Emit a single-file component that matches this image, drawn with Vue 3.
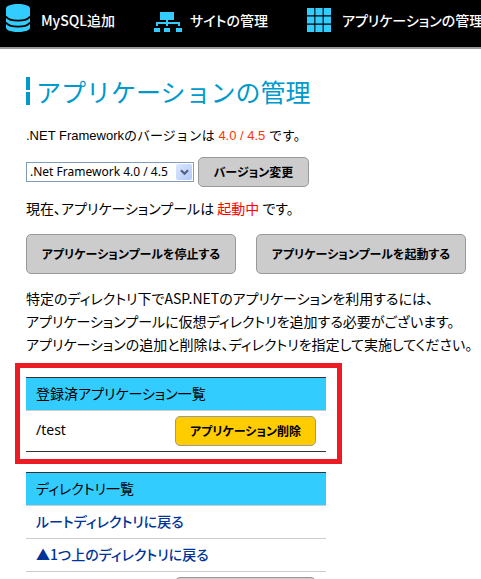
<script setup>
import { ref } from 'vue'

const version = ref('4')
</script>

<template>
  <div class="page">
    <header class="topbar">
      <nav class="nav">
        <a class="nav-item database" href="#">
          <svg width="24" height="28" viewBox="0 0 24 28" aria-hidden="true">
            <path fill="#33ccff" d="M0 4.5C0 -1.5 24 -1.5 24 4.5V23.5C24 29.5 0 29.5 0 23.5Z" />
            <path fill="none" stroke="#000" stroke-width="1.6" d="M0 12.5C3 18 21 18 24 12.5M0 18.5C3 24 21 24 24 18.5" />
          </svg>
          <span>MySQL追加</span>
        </a>
        <a class="nav-item site" href="#">
          <svg width="28" height="20" viewBox="0 0 28 20" aria-hidden="true">
            <path fill="#33ccff" d="M6 0h14v8H6zM12 8h2v6h-2zM2 10h24v4h-2v-2H4v2H2zM0 16h6v4H0zM10 16h6v4h-6zM22 16h6v4h-6z" />
          </svg>
          <span>サイトの管理</span>
        </a>
        <a class="nav-item application" href="#">
          <svg width="24" height="24" viewBox="0 0 24 24" aria-hidden="true">
            <path fill="#33ccff" d="M0 0h7.3v7.3H0zM8.4 0h7.2v7.3H8.4zM16.7 0H24v7.3h-7.3zM0 8.4h7.3v7.2H0zM8.4 8.4h7.2v7.2H8.4zM16.7 8.4H24v7.2h-7.3zM0 16.7h7.3V24H0zM8.4 16.7h7.2V24H8.4zM16.7 16.7H24V24h-7.3z" />
          </svg>
          <span>アプリケーションの管理</span>
        </a>
      </nav>
    </header>

    <main class="content">
      <h1 class="title">
        <span class="title-mark" aria-hidden="true"><i></i><i></i></span>
        アプリケーションの管理
      </h1>

      <p class="status framework">
        <label for="version">.NET Frameworkのバージョンは</label> <span class="version">4.0 / 4.5</span> です。
      </p>

      <form class="version-form" @submit.prevent>
        <span class="select-box">
          <select id="version" v-model="version">
            <option value="4">.Net Framework 4.0 / 4.5</option>
          </select>
          <span class="arrow" aria-hidden="true">
            <svg width="9" height="7" viewBox="0 0 9 7">
              <path fill="none" stroke="#4d6185" stroke-width="2.2" d="M1 1.2L4.5 4.7L8 1.2" />
            </svg>
          </span>
        </span>
        <button class="button small" type="submit">バージョン変更</button>
      </form>

      <p class="status">現在、アプリケーションプールは <span class="running">起動中</span> です。</p>

      <div class="pool-actions">
        <button class="button large" type="button">アプリケーションプールを停止する</button>
        <button class="button large" type="button">アプリケーションプールを起動する</button>
      </div>

      <p class="note">
        特定のディレクトリ下でASP.NETのアプリケーションを利用するには、<br />
        アプリケーションプールに仮想ディレクトリを追加する必要がございます。<br />
        アプリケーションの追加と削除は、ディレクトリを指定して実施してください。
      </p>

      <section class="highlight">
        <table class="list registered">
          <thead>
            <tr><th colspan="2" scope="col">登録済アプリケーション一覧</th></tr>
          </thead>
          <tbody>
            <tr>
              <td class="path">/test</td>
              <td class="action"><button class="button small yellow" type="button">アプリケーション削除</button></td>
            </tr>
          </tbody>
        </table>
      </section>

      <table class="list directories">
        <thead>
          <tr><th scope="col">ディレクトリ一覧</th></tr>
        </thead>
        <tbody>
          <tr><td><a href="#">ルートディレクトリに戻る</a></td></tr>
          <tr><td><a href="#">▲1つ上のディレクトリに戻る</a></td></tr>
          <tr><td class="action"><button class="button small" type="button" aria-label="追加"></button></td></tr>
        </tbody>
      </table>
    </main>
  </div>
</template>

<style>
html {
  overflow-x: hidden;
}
body {
  margin: 0;
  background: #fff;
}
</style>

<style scoped>
.page {
  height: 100vh;
  overflow: hidden;
  color: #000;
  font-family: "Noto Sans CJK JP", sans-serif;
  font-size: 14px;
  line-height: 22px;
  font-feature-settings: "palt";
}
.topbar {
  height: 47px;
  background: #000;
  border-bottom: 2px solid #999;
  overflow: hidden;
}
.nav {
  display: flex;
  width: max-content;
  padding-left: 6px;
  gap: 39px;
}
.nav-item {
  display: flex;
  align-items: center;
  gap: 11px;
  height: 40px;
  color: #fff;
  font-weight: 500;
  text-decoration: none;
  white-space: nowrap;
}
.nav-item svg {
  flex: none;
}
.database svg {
  margin-bottom: 4px;
}
.site {
  gap: 8px;
}
.site svg {
  margin-top: 4px;
}
.content {
  padding: 26px 15px 0 26px;
}
.title {
  display: flex;
  align-items: center;
  gap: 6px;
  margin: 0 0 18px;
  color: #0099cc;
  font-size: 25px;
  font-weight: 400;
  line-height: 32px;
  font-feature-settings: normal;
  white-space: nowrap;
}
.title-mark {
  display: grid;
  gap: 2px;
}
.title-mark i {
  width: 4px;
  height: 13px;
  background: #0099cc;
}
.status {
  margin: 0;
  white-space: nowrap;
}
.framework {
  font-family: "Liberation Sans", "Noto Sans CJK JP", sans-serif;
  font-size: 13px;
  font-feature-settings: normal;
}
.version {
  color: #ff3300;
}
.running {
  color: #f00;
}
.version-form {
  display: flex;
  align-items: center;
  gap: 4px;
  margin: 10px 0;
}
.select-box {
  display: grid;
  grid-template-columns: 1fr 18px;
  box-sizing: border-box;
  width: 168px;
  height: 20px;
  border: 1px solid #7f9db9;
}
.select-box select {
  grid-area: 1 / 1 / 2 / 3;
  appearance: none;
  min-width: 0;
  margin: 0;
  padding: 0 18px 0 3px;
  border: 0;
  border-radius: 0;
  background: #fff;
  color: #000;
  font-family: "Noto Sans", sans-serif;
  font-size: 12px;
  line-height: 18px;
}
.arrow {
  grid-area: 1 / 2;
  display: flex;
  align-items: center;
  justify-content: center;
  margin: 1px;
  border-radius: 2px;
  background: linear-gradient(135deg, #dce6fe, #b3c9f8);
  pointer-events: none;
}
.button {
  box-sizing: border-box;
  padding: 0 12px;
  border: 1px solid #999;
  border-radius: 5px;
  background: #ccc;
  color: #000;
  font-family: inherit;
  font-size: 12px;
  font-weight: 700;
  font-feature-settings: inherit;
  line-height: 20px;
  white-space: nowrap;
}
.small {
  height: 30px;
  min-width: 111px;
}
.large {
  height: 40px;
  min-width: 210px;
}
.yellow {
  background: #ffcc00;
}
.pool-actions {
  display: flex;
  gap: 20px;
  margin: 15px 0 13px;
}
.note {
  margin: 0;
  line-height: 23px;
  white-space: nowrap;
}
.highlight {
  box-sizing: border-box;
  width: 327px;
  margin: 7px 0 8px -11px;
  padding: 9px 11px 7px 6px;
  border: 5px solid #ed1c24;
}
.list {
  width: 300px;
  border-collapse: separate;
  border-spacing: 0;
  border-top: 1px solid #333;
}
.registered {
  border-bottom: 1px solid #333;
}
.list th,
.list td {
  box-sizing: border-box;
  height: 33px;
  padding: 0 10px 2px;
  text-align: left;
  font-weight: 400;
}
.list th {
  background: #33ccff;
  border-bottom: 1px solid #ccc;
}
.directories td {
  border-bottom: 1px solid #ccc;
}
.registered td {
  height: 40px;
}
.list .path {
  font-family: "Noto Sans", sans-serif;
}
.list .action {
  padding: 5px 10px 5px 0;
  text-align: right;
}
.list .action .button {
  display: block;
  min-width: 141px;
  margin-left: auto;
}
.list a {
  color: #003399;
  font-weight: 500;
  text-decoration: none;
}
</style>
